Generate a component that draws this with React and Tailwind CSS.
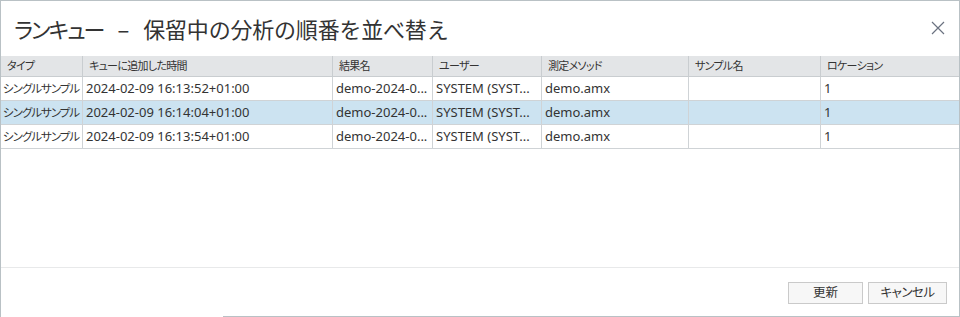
import React from "react";

const cols = [
  { w: 82, label: "タイプ" },
  { w: 250, label: "キューに追加した時間" },
  { w: 100, label: "結果名" },
  { w: 109, label: "ユーザー" },
  { w: 147, label: "測定メソッド" },
  { w: 132, label: "サンプル名" },
  { w: 138, label: "ロケーション" },
];

const rows = [
  ["シングルサンプル", "2024-02-09 16:13:52+01:00", "demo-2024-0...", "SYSTEM (SYST...", "demo.amx", "", "1"],
  ["シングルサンプル", "2024-02-09 16:14:04+01:00", "demo-2024-0...", "SYSTEM (SYST...", "demo.amx", "", "1"],
  ["シングルサンプル", "2024-02-09 16:13:54+01:00", "demo-2024-0...", "SYSTEM (SYST...", "demo.amx", "", "1"],
];

const font = "font-['Segoe_UI','Noto_Sans','Noto_Sans_CJK_JP',sans-serif]";
const palt = "[font-feature-settings:'palt']";

export default function App() {
  return (
    <div className={`w-[960px] h-[317px] flex flex-col bg-white border-l border-r border-t border-[#b9c1c5] text-[#333] ${font}`}>
      <div className="h-[55px] shrink-0 flex items-center justify-between pl-[13px] pr-[14px]">
        <div className="flex items-center text-[22px] leading-none mt-[-1px] text-[#333] font-['Noto_Sans_CJK_JP',sans-serif] whitespace-nowrap">
          <span className={`${palt} tracking-[-2px]`}>ランキュー</span>
          <span className="pl-[14px] pr-[14px]">–</span>
          <span className="tracking-[-0.2px]">保留中の分析の順番を並べ替え</span>
        </div>
        <svg width="14" height="14" viewBox="0 0 14 14" className="mt-[-2px]">
          <path d="M1 1 L13 13 M13 1 L1 13" stroke="#6b7280" strokeWidth="1.2" fill="none" />
        </svg>
      </div>
      <div className="h-[211px] shrink-0 flex flex-col">
        <div className={`flex h-[21px] bg-[#e3e5e7] border-b border-[#c9cdd0] ${palt}`}>
          {cols.map((c, i) => (
            <div
              key={i}
              style={{ width: c.w }}
              className={`shrink-0 flex items-center pl-[6px] text-[11px] tracking-[-0.7px] ${i < cols.length - 1 ? "border-r border-[#c9cdd0]" : ""}`}
            >
              {c.label}
            </div>
          ))}
        </div>
        {rows.map((r, ri) => (
          <div key={ri} className={`flex h-[24px] border-b border-[#cfd3d6] ${ri === 1 ? "bg-[#cce3f1]" : "bg-white"}`}>
            {r.map((cell, ci) => (
              <div
                key={ci}
                style={{ width: cols[ci].w }}
                className={`shrink-0 flex items-center overflow-hidden whitespace-nowrap ${ci === 0 ? `pl-[2px] text-[11.5px] tracking-[-1px] ${palt}` : "pl-[3px] text-[13px]"} ${ci < r.length - 1 ? "border-r border-[#cfd3d6]" : ""}`}
              >
                {cell}
              </div>
            ))}
          </div>
        ))}
      </div>
      <div className="h-px shrink-0 bg-[#e8e9ea]" />
      <div className="h-[48px] shrink-0 flex justify-end items-start pt-[14px] pr-[12px] gap-[5px]">
        <button className={`w-[75px] h-[22px] bg-[#f7f7f7] border border-[#cacaca] text-[12.5px] text-[#333] flex items-center justify-center ${palt}`}>更新</button>
        <button className={`w-[79px] h-[22px] bg-[#f7f7f7] border border-[#cacaca] text-[12.5px] text-[#333] flex items-center justify-center tracking-[-0.5px] ${palt}`}>キャンセル</button>
      </div>
      <div className="h-px shrink-0 ml-[222px] bg-[#b9c1c5]" />
    </div>
  );
}
